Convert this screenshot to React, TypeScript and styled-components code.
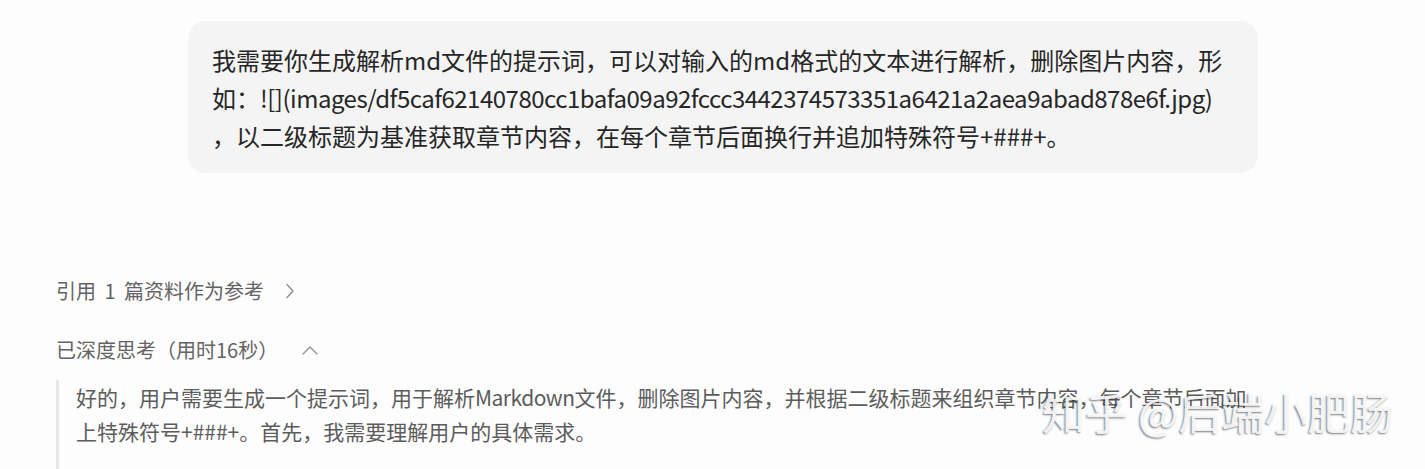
import React from "react";
import styled, { createGlobalStyle } from "styled-components";

const GlobalStyle = createGlobalStyle`
  html, body {
    margin: 0;
    padding: 0;
    background: #fdfdfd;
  }
  body {
    font-family: "Noto Sans CJK SC", "Noto Sans", sans-serif;
  }
`;

const App = () => {
  return (
    <>
      <GlobalStyle />
      <Page>
        <Column>
          <Bubble>
            我需要你生成解析md文件的提示词，可以对输入的md格式的文本进行解析，删除图片内容，形
            <br />
            如：<Tight>![](images/df5caf62140780cc1bafa09a92fccc3442374573351a6421a2aea9abad878e6f.jpg)</Tight>
            <br />
            ，以二级标题为基准获取章节内容，在每个章节后面换行并追加特殊符号+###+。
          </Bubble>

          <MetaRow top={104} gap={21}>
            <Label>引用 1 篇资料作为参考</Label>
            <ChevronRight />
          </MetaRow>

          <MetaRow top={31} gap={24}>
            <Label>已深度思考（用时16秒）</Label>
            <ChevronUp />
          </MetaRow>

          <Thought>
            好的，用户需要生成一个提示词，用于解析<Tight>Markdown</Tight>文件，删除图片内容，并根据二级标题来组织章节内容，每个章节后面加
            <br />
            上特殊符号+###+。首先，我需要理解用户的具体需求。
          </Thought>
        </Column>

        <Watermark>知乎 @后端小肥肠</Watermark>
      </Page>
    </>
  );
};

const ChevronRight = () => (
  <Icon width="10" height="16" viewBox="0 0 10 16">
    <path d="M2 1.5 L8 8 L2 14.5" />
  </Icon>
);

const ChevronUp = () => (
  <Icon width="16" height="9" viewBox="0 0 16 9">
    <path d="M1 8 L8 1 L15 8" />
  </Icon>
);

const Page = styled.div`
  position: relative;
  width: 1425px;
  height: 469px;
  overflow: hidden;
  box-sizing: border-box;
  padding: 21px 0 0 56px;
`;

const Column = styled.div`
  width: 1202px;
  display: flex;
  flex-direction: column;
`;

const Bubble = styled.div`
  align-self: flex-end;
  width: 1070px;
  box-sizing: border-box;
  padding: 20px 24px 18px;
  background: #f4f4f4;
  border-radius: 18px;
  font-size: 24px;
  line-height: 38px;
  color: #262626;
  white-space: nowrap;
`;

const Tight = styled.span`
  letter-spacing: -0.5px;
`;

const MetaRow = styled.div<{ top: number; gap: number }>`
  margin-top: ${(props) => props.top}px;
  display: flex;
  align-items: center;
  gap: ${(props) => props.gap}px;
  font-size: 20px;
  line-height: 28px;
  color: #646464;
`;

const Label = styled.span`
  word-spacing: 4px;
`;

const Icon = styled.svg`
  flex: none;
  fill: none;
  stroke: #8c8c8c;
  stroke-width: 1.3;
  stroke-linecap: round;
  stroke-linejoin: round;
`;

const Thought = styled.div`
  margin-top: 16px;
  padding: 0 0 60px 17px;
  border-left: 3px solid #e6e6e6;
  font-size: 21px;
  line-height: 34px;
  color: #5c5c5c;
  white-space: nowrap;
`;

const Watermark = styled.div`
  position: absolute;
  left: 1042px;
  top: 386px;
  font-size: 43px;
  line-height: 50px;
  color: rgba(255, 255, 255, 0.88);
  text-shadow: -1px 1px 2px rgba(0, 0, 0, 0.5);
  white-space: nowrap;
  pointer-events: none;
`;

export default App;
